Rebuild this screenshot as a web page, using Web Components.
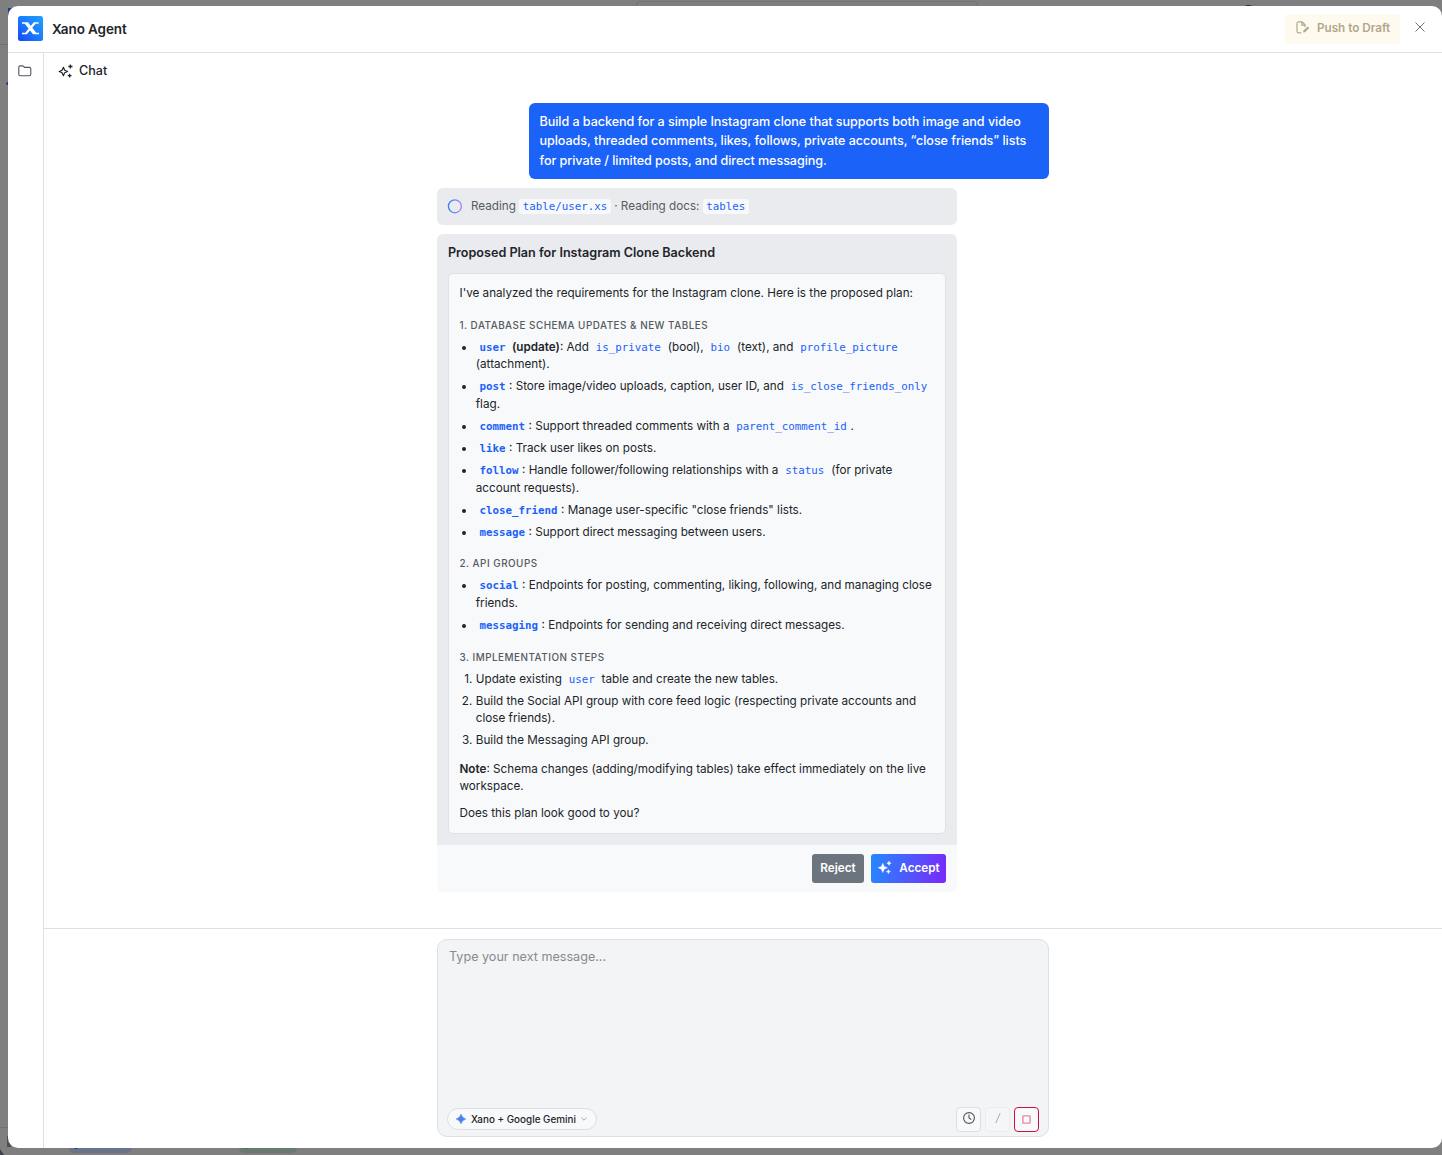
<!DOCTYPE html>
<html lang="en">
<head>
<meta charset="utf-8">
<title>Xano Agent</title>
<style>
	html, body {
		margin: 0;
		height: 100%;
		overflow: hidden;
		background: #7f7f7f;
		font-family: Inter, "Liberation Sans", sans-serif;
		color: #212529;
	}
</style>
</head>
<body>
<agent-modal>
	<page-backdrop slot="backdrop"></page-backdrop>
	<modal-header slot="header" heading="Xano Agent"></modal-header>
	<side-rail slot="rail"></side-rail>
	<chat-title slot="title">Chat</chat-title>
	<user-message slot="chat">Build a backend for a simple Instagram clone that supports both image and video uploads, threaded comments, likes, follows, private accounts, “close friends” lists for private / limited posts, and direct messaging.</user-message>
	<agent-status slot="chat">Reading <code-chip filled>table/user.xs</code-chip> · Reading docs: <code-chip filled>tables</code-chip></agent-status>
	<plan-card slot="chat" heading="Proposed Plan for Instagram Clone Backend">
		<plan-text style="margin-bottom: 15.4px">I've analyzed the requirements for the Instagram clone. Here is the proposed plan:</plan-text>
		<plan-heading>1. Database Schema Updates &amp; New Tables</plan-heading>
		<plan-list style="margin-bottom: 15px">
			<plan-item><b><code-chip>user</code-chip> (update)</b>: Add <code-chip>is_private</code-chip> (bool), <code-chip>bio</code-chip> (text), and <code-chip>profile_picture</code-chip> (attachment).</plan-item>
			<plan-item><b><code-chip>post</code-chip></b>: Store image/video uploads, caption, user ID, and <code-chip>is_close_friends_only</code-chip> flag.</plan-item>
			<plan-item><b><code-chip>comment</code-chip></b>: Support threaded comments with a <code-chip>parent_comment_id</code-chip>.</plan-item>
			<plan-item><b><code-chip>like</code-chip></b>: Track user likes on posts.</plan-item>
			<plan-item><b><code-chip>follow</code-chip></b>: Handle follower/following relationships with a <code-chip>status</code-chip> (for private account requests).</plan-item>
			<plan-item><b><code-chip>close_friend</code-chip></b>: Manage user-specific "close friends" lists.</plan-item>
			<plan-item><b><code-chip>message</code-chip></b>: Support direct messaging between users.</plan-item>
		</plan-list>
		<plan-heading>2. API Groups</plan-heading>
		<plan-list>
			<plan-item><b><code-chip>social</code-chip></b>: Endpoints for posting, commenting, liking, following, and managing close friends.</plan-item>
			<plan-item><b><code-chip>messaging</code-chip></b>: Endpoints for sending and receiving direct messages.</plan-item>
		</plan-list>
		<plan-heading>3. Implementation Steps</plan-heading>
		<plan-list style="margin-bottom: 11px; gap: 4.3px">
			<plan-item marker="1.">Update existing <code-chip>user</code-chip> table and create the new tables.</plan-item>
			<plan-item marker="2.">Build the Social API group with core feed logic (respecting private accounts and close friends).</plan-item>
			<plan-item marker="3.">Build the Messaging API group.</plan-item>
		</plan-list>
		<plan-text style="margin-bottom: 9.4px"><b>Note</b>: Schema changes (adding/modifying tables) take effect immediately on the live workspace.</plan-text>
		<plan-text>Does this plan look good to you?</plan-text>
	</plan-card>
	<message-composer slot="composer" placeholder="Type your next message..." model="Xano + Google Gemini"></message-composer>
</agent-modal>

<script>
const icons = {
	logo: `<svg viewBox="0 0 25 25"><defs><linearGradient id="g" x1="1" y1="0" x2="0" y2="1"><stop offset="0" stop-color="#1fa2ff"/><stop offset=".5" stop-color="#1c7bff"/><stop offset="1" stop-color="#1549f5"/></linearGradient></defs><rect width="25" height="25" rx="2.5" fill="url(#g)"/><path fill="#fff" d="M4 6.300h6L18.200 16.800H21v1.400h-6L6.800 7.700H4z"/><path fill="#fff" d="M20.600 6.300h-4.800L7.300 16.800H4v1.400h4.800L17.600 7.700h3z"/></svg>`,
	folder: `<svg viewBox="0 0 14 12" fill="none" stroke="#50565c" stroke-width="1.100" stroke-linejoin="round"><path d="M.8 9.300V2.400Q.8.900 2.300.9h2.200q.6 0 1 .4l.7.700q.4.400 1 .4h4.100q1.500 0 1.500 1.500v5.400q0 1.500-1.500 1.500h-9Q.8 10.800.8 9.300z"/></svg>`,
	sparkles: `<svg viewBox="0 0 16 14" fill="none" stroke="currentColor" stroke-width="1.200" stroke-linejoin="round"><path d="M5.400 3.300 6.700 6.200l2.900 1.300-2.900 1.300-1.300 2.900-1.300-2.900L1.200 7.500l2.900-1.300z"/><path d="M12.400.4v4.200M10.300 2.500h4.200M11.600 9.700v3.800M9.700 11.600h3.800" stroke-width="1.300"/></svg>`,
	sparklesFilled: `<svg viewBox="0 0 14 13" fill="#fff" stroke="#fff" stroke-width=".4"><path d="M4.800 2.200 6.200 5.400l3.300 1.400-3.300 1.400-1.400 3.300-1.400-3.300L.1 6.800l3.300-1.400zM11 0l.7 1.500 1.500.7-1.500.7-.7 1.500-.7-1.500-1.500-.7 1.500-.7zM10.400 8.500l.6 1.500 1.500.6-1.500.6-.6 1.500-.6-1.500-1.500-.6 1.500-.6z"/></svg>`,
	draft: `<svg viewBox="0 0 14 13" fill="none" stroke="#b1a78a" stroke-width="1.200"><path d="M5.300 11.800H2.500Q1 11.800 1 10.300V2.300Q1 .8 2.500.8h3.600l3 3v2.400M5.800.8v3.300h3.300"/><path d="m7 11.600.5-2 4.200-4.100 1.600 1.600L9 11.200z" fill="#b1a78a" stroke="none"/></svg>`,
	close: `<svg viewBox="0 0 10 10" fill="none" stroke="#6c7278" stroke-width="1"><path d="m.5.500 9 9m0-9-9 9"/></svg>`,
	gemini: `<svg viewBox="0 0 10 10"><defs><linearGradient id="gem"><stop offset="0" stop-color="#5a78d8"/><stop offset="1" stop-color="#3b8bf5"/></linearGradient></defs><path d="M5 0Q6 4 10 5 6 6 5 10 4 6 0 5 4 4 5 0z" fill="url(#gem)" stroke="url(#gem)" stroke-width=".5"/></svg>`,
	chevron: `<svg viewBox="0 0 6 4" fill="none" stroke="#8e9398" stroke-width=".8"><path d="m.4.600 2.600 2.600L5.600.6"/></svg>`,
	clock: `<svg viewBox="0 0 12 12" fill="none" stroke="#50565c" stroke-width="1.100"><circle cx="6" cy="6" r="5.400"/><path d="M6 2.600V6l2.300 1.500"/></svg>`,
	slash: `<svg viewBox="0 0 6 12" fill="none" stroke="#a9adb1" stroke-width="1"><path d="M5.200 1 .8 11"/></svg>`,
	stop: `<svg viewBox="0 0 9 9" fill="none" stroke="#e58ba3" stroke-width="1.400"><rect x=".9" y=".9" width="7.200" height="7.200" rx=".6"/></svg>`,
	spinner: `<svg viewBox="0 0 15 15" fill="none" stroke-width="1.300"><defs><linearGradient id="s"><stop offset="0" stop-color="#2f80ff"/><stop offset="1" stop-color="#a78bfa"/></linearGradient></defs><circle cx="7.900" cy="7.300" r="6.500" stroke="url(#s)"/></svg>`
};

// Attaches an open shadow root filled with the given markup
class BaseElement extends HTMLElement {
	constructor() {
		super();
		this.attachShadow({ mode: 'open' });
		const template = document.createElement('template');
		// trimmed, so inline elements get no trailing space
		template.innerHTML = this.template().trim();
		this.shadowRoot.appendChild(template.content.cloneNode(true));
	}
	template() {
		return '<slot></slot>';
	}
}

class UiIcon extends BaseElement {
	template() {
		return `
			<style>
				:host { display: block; flex: none; }
				svg { display: block; width: 100%; height: 100%; }
			</style>
			${icons[this.getAttribute('name')]}
		`;
	}
}
customElements.define('ui-icon', UiIcon);

class AgentModal extends BaseElement {
	template() {
		return `
			<style>
				:host { display: block; box-sizing: border-box; height: 1155px; padding: 6px 0 7px 8px; position: relative; }
				.dialog {
					position: relative;
					display: flex;
					flex-direction: column;
					height: 1142px;
					background: #fff;
					border-radius: 10px;
					overflow: hidden;
				}
				.body { display: flex; flex: 1; min-height: 0; }
				main { display: flex; flex-direction: column; flex: 1; }
				.chat {
					display: flex;
					flex-direction: column;
					gap: 9px;
					width: 612px;
					height: 825px;
					margin: 0 auto;
				}
				.composer { flex: 1; border-top: 1px solid #dee0e4; padding-top: 10px; }
			</style>
			<slot name="backdrop"></slot>
			<div class="dialog">
				<slot name="header"></slot>
				<div class="body">
					<slot name="rail"></slot>
					<main>
						<slot name="title"></slot>
						<div class="chat"><slot name="chat"></slot></div>
						<div class="composer"><slot name="composer"></slot></div>
					</main>
				</div>
			</div>
		`;
	}
}
customElements.define('agent-modal', AgentModal);

// Dimmed bits of the page that stay visible round the dialog
class PageBackdrop extends BaseElement {
	template() {
		return `
			<style>
				:host { position: absolute; inset: 0; overflow: hidden; }
				i { position: absolute; box-sizing: border-box; }
			</style>
			<i style="left:0;top:44px;width:8px;height:1px;background:#6f7073"></i>
			<i style="left:8px;top:8px;width:8px;height:8px;background:#1b3f91"></i>
			<i style="left:6px;top:82px;width:3px;height:3px;border-radius:2px;background:#1c3f91"></i>
			<i style="left:0;top:1127px;width:8px;height:1px;background:#6f7073"></i>
			<i style="left:7px;top:1136px;width:4px;height:11px;background:#4c5056"></i>
			<i style="left:-4px;top:1149px;width:8px;height:14px;background:#41454b;transform:rotate(-35deg)"></i>
			<i style="left:636px;top:1px;width:342px;height:20px;border:1px solid #707173;border-radius:4px"></i>
			<i style="left:1243px;top:5px;width:11px;height:10px;border-radius:5px;background:#16306f"></i>
			<i style="left:69px;top:1138px;width:63px;height:15px;border-radius:5px;background:#69738a"></i>
			<i style="left:74px;top:1145px;width:4px;height:4px;border-radius:2px;background:#143a91"></i>
			<i style="left:239px;top:1138px;width:58px;height:15px;border-radius:5px;background:#6a7a70"></i>
			<i style="left:244px;top:1145px;width:4px;height:4px;border-radius:2px;background:#3f6b50"></i>
		`;
	}
}
customElements.define('page-backdrop', PageBackdrop);

class ModalHeader extends BaseElement {
	template() {
		return `
			<style>
				:host {
					display: flex;
					align-items: center;
					box-sizing: border-box;
					height: 47px;
					padding: 0 17px 1px 10px;
					border-bottom: 1px solid #dee0e4;
				}
				.logo { width: 25px; height: 25px; margin-right: 9px; }
				h1 { flex: 1; margin: 0; font-size: 13.500px; font-weight: 600; line-height: 20px; letter-spacing: -.1px; }
				button {
					display: flex;
					align-items: center;
					gap: 7px;
					width: 115px;
					height: 30px;
					padding: 0 0 2px 11px;
					margin: 0 15px 0 0;
					border: 0;
					border-radius: 4px;
					background: #fffaef;
					color: #b1a78a;
					font: 600 11.700px/18px Inter, sans-serif;
					white-space: nowrap;
				}
				.draft { width: 14px; height: 13px; }
				.close { width: 10px; height: 10px; margin-bottom: 3px; }
			</style>
			<ui-icon class="logo" name="logo"></ui-icon>
			<h1>${this.getAttribute('heading')}</h1>
			<button><ui-icon class="draft" name="draft"></ui-icon>Push to Draft</button>
			<ui-icon class="close" name="close"></ui-icon>
		`;
	}
}
customElements.define('modal-header', ModalHeader);

class SideRail extends BaseElement {
	template() {
		return `
			<style>
				:host { display: block; box-sizing: border-box; width: 36px; padding: 12px 0 0 10px; border-right: 1px solid #dee0e4; }
				ui-icon { width: 14px; height: 12px; }
			</style>
			<ui-icon name="folder"></ui-icon>
		`;
	}
}
customElements.define('side-rail', SideRail);

class ChatTitle extends BaseElement {
	template() {
		return `
			<style>
				:host { display: flex; align-items: center; gap: 5px; height: 35px; padding: 0 0 15px 14px; font-size: 12.600px; font-weight: 500; }
				ui-icon { width: 16px; height: 14px; }
			</style>
			<ui-icon name="sparkles"></ui-icon>
			<slot></slot>
		`;
	}
}
customElements.define('chat-title', ChatTitle);

class UserMessage extends BaseElement {
	template() {
		return `
			<style>
				:host {
					display: block;
					box-sizing: border-box;
					align-self: flex-end;
					width: 520px;
					height: 76px;
					padding: 8.900px 10.5px;
					border-radius: 6px;
					background: #1b62f8;
					color: #fff;
					font-size: 12.600px;
					font-weight: 500;
					line-height: 19.5px;
					letter-spacing: -.060px;
				}
			</style>
			<slot></slot>
		`;
	}
}
customElements.define('user-message', UserMessage);

class CodeChip extends BaseElement {
	template() {
		return `
			<style>
				:host {
					display: inline;
					padding: 1px 3.600px;
					border-radius: 3px;
					color: #1b62f8;
					font-family: "DejaVu Sans Mono", monospace;
					font-size: 10.8px;
					line-height: 1;
				}
				:host([filled]) { background: #f8f9fb; }
			</style>
			<slot></slot>
		`;
	}
}
customElements.define('code-chip', CodeChip);

class AgentStatus extends BaseElement {
	template() {
		return `
			<style>
				:host {
					display: flex;
					align-items: center;
					gap: 9px;
					box-sizing: border-box;
					width: 520px;
					height: 37px;
					padding: 0 10px 1px;
					border-radius: 6px;
					background: #eaebef;
					color: #565b60;
					font-size: 11.700px;
				}
				ui-icon { width: 15px; height: 15px; }
			</style>
			<ui-icon name="spinner"></ui-icon>
			<div><slot></slot></div>
		`;
	}
}
customElements.define('agent-status', AgentStatus);

class PlanCard extends BaseElement {
	template() {
		return `
			<style>
				:host {
					display: block;
					width: 520px;
					border-radius: 6px;
					overflow: hidden;
				}
				section { box-sizing: border-box; height: 611px; padding: 9px 11px 0; background: #eaebef; }
				h2 { margin: 0 0 10px; font-size: 12.600px; font-weight: 600; line-height: 20px; }
				.content {
					box-sizing: border-box;
					height: 561px;
					padding: 11px 10.500px;
					border: 1px solid #dfe1e5;
					border-radius: 5px;
					background: #f8f9fb;
				}
				footer {
					display: flex;
					justify-content: flex-end;
					gap: 7px;
					height: 29px;
					padding: 9px 11px;
					background: #f8f9fb;
				}
				button {
					display: flex;
					align-items: center;
					justify-content: center;
					height: 29px;
					padding: 0 0 1px;
					border: 0;
					border-radius: 3px;
					color: #fff;
					font: 600 11.700px/18px Inter, sans-serif;
				}
				.reject { width: 52px; background: #6c757d; }
				.accept { gap: 7px; width: 75px; padding-left: 1px; background: linear-gradient(100deg, #2389ff, #7a28fa); }
				ui-icon { width: 14px; height: 13px; margin-top: -2px; }
			</style>
			<section>
				<h2>${this.getAttribute('heading')}</h2>
				<div class="content"><slot></slot></div>
			</section>
			<footer>
				<button class="reject">Reject</button>
				<button class="accept"><ui-icon name="sparklesFilled"></ui-icon>Accept</button>
			</footer>
		`;
	}
}
customElements.define('plan-card', PlanCard);

class PlanText extends BaseElement {
	template() {
		return `
			<style>
				:host { display: block; font-size: 11.7px; line-height: 17.550px; }
				::slotted(b) { font-weight: 600; }
			</style>
			<slot></slot>
		`;
	}
}
customElements.define('plan-text', PlanText);

class PlanHeading extends BaseElement {
	template() {
		return `
			<style>
				:host {
					display: block;
					margin-bottom: 5.300px;
					color: #565b60;
					font-size: 9.900px;
					font-weight: 500;
					line-height: 15.600px;
					letter-spacing: .5px;
					text-transform: uppercase;
				}
			</style>
			<slot></slot>
		`;
	}
}
customElements.define('plan-heading', PlanHeading);

class PlanList extends BaseElement {
	template() {
		return `
			<style>
				:host { display: flex; flex-direction: column; gap: 4.500px; margin-bottom: 15.500px; }
			</style>
			<slot></slot>
		`;
	}
}
customElements.define('plan-list', PlanList);

class PlanItem extends BaseElement {
	template() {
		const marker = this.getAttribute('marker');
		return `
			<style>
				:host { display: grid; grid-template-columns: 16.300px 1fr; font-size: 11.7px; line-height: 17.550px; }
				.marker { padding-right: 3.500px; text-align: right; white-space: nowrap; }
				.dot { width: 4px; height: 4px; margin: 7px 0 0 2.500px; border-radius: 50%; background: #212529; }
				::slotted(b) { font-weight: 600; }
			</style>
			${marker ? `<div class="marker">${marker}</div>` : '<div class="dot"></div>'}
			<div><slot></slot></div>
		`;
	}
}
customElements.define('plan-item', PlanItem);

class MessageComposer extends BaseElement {
	template() {
		return `
			<style>
				:host {
					display: flex;
					flex-direction: column;
					justify-content: space-between;
					box-sizing: border-box;
					width: 612px;
					height: 198px;
					margin: 0 auto;
					padding: 7px 9px 4px;
					border: 1px solid #dcdfe3;
					border-radius: 10px;
					background: #f3f4f6;
				}
				.placeholder { padding-left: 2px; color: #868b90; font-size: 12.600px; line-height: 20px; }
				.bar { display: flex; align-items: center; gap: 4px; }
				.model {
					display: flex;
					align-items: center;
					box-sizing: border-box;
					width: 150px;
					height: 22px;
					margin: 0 auto 1px 0;
					padding-left: 8px;
					border: 1px solid #dcdfe3;
					border-radius: 11px;
					background: #f8f9fb;
					font-size: 9.900px;
					font-weight: 500;
					white-space: nowrap;
				}
				.gemini { width: 10px; height: 10px; margin-right: 5px; }
				.chevron { width: 6px; height: 4px; margin-left: 5px; }
				.tool {
					display: grid;
					place-items: center;
					box-sizing: border-box;
					width: 25px;
					height: 25px;
					border: 1px solid #dcdfe3;
					border-radius: 4px;
					background: #f8f9fb;
				}
				.muted { border-color: #eaecef; background: #f5f6f8; }
				.stop { border-color: #cc0f45; }
				.clock { width: 12px; height: 12px; margin-top: -3px; }
				.slash { width: 6px; height: 12px; margin-top: -3px; }
				.square { width: 9px; height: 9px; }
			</style>
			<div class="placeholder">${this.getAttribute('placeholder')}</div>
			<div class="bar">
				<div class="model">
					<ui-icon class="gemini" name="gemini"></ui-icon>
					<span>${this.getAttribute('model')}</span>
					<ui-icon class="chevron" name="chevron"></ui-icon>
				</div>
				<div class="tool"><ui-icon class="clock" name="clock"></ui-icon></div>
				<div class="tool muted"><ui-icon class="slash" name="slash"></ui-icon></div>
				<div class="tool stop"><ui-icon class="square" name="stop"></ui-icon></div>
			</div>
		`;
	}
}
customElements.define('message-composer', MessageComposer);
</script>
</body>
</html>
